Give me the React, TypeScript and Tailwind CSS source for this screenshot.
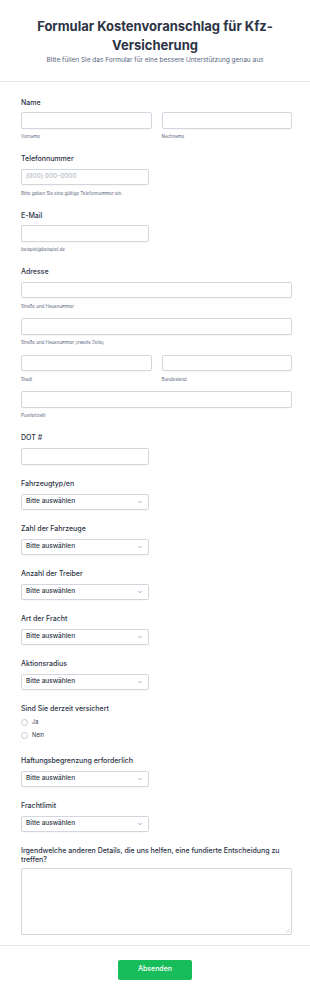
import { ChevronDown } from "lucide-react";

const selects = [
  "Fahrzeugtyp/en",
  "Zahl der Fahrzeuge",
  "Anzahl der Treiber",
  "Art der Fracht",
  "Aktionsradius",
];

function Label({ children }: { children: React.ReactNode }) {
  return (
    <p className="text-[7px] leading-[10px] font-medium text-[#2c3345]">
      {children}
    </p>
  );
}

function Sub({ children }: { children: React.ReactNode }) {
  return (
    <p className="mt-[4.5px] text-[4.5px] leading-[7px] text-[#57647e]">
      {children}
    </p>
  );
}

function Input({ className = "", placeholder }: { className?: string; placeholder?: string }) {
  return (
    <div
      className={`flex h-[16.5px] items-center rounded-[2px] border border-[#d3d6de] bg-white px-[4px] shadow-[0_1px_1px_rgba(0,0,0,0.03)] ${className}`}
    >
      {placeholder && (
        <span className="text-[6.5px] text-[#a5adbd]">{placeholder}</span>
      )}
    </div>
  );
}

function Select({ label }: { label: string }) {
  return (
    <div className="mb-[13.5px]">
      <Label>{label}</Label>
      <div className="mt-[5px] flex h-[16.5px] w-[128px] items-center justify-between rounded-[2px] border border-[#d3d6de] bg-white pl-[4px] pr-[5px] shadow-[0_1px_1px_rgba(0,0,0,0.03)]">
        <span className="text-[6.5px] font-medium text-[#2c3345]">
          Bitte auswählen
        </span>
        <ChevronDown size={6} strokeWidth={2} className="text-[#57647e]" />
      </div>
    </div>
  );
}

function Radio({ label }: { label: string }) {
  return (
    <div className="flex h-[13px] items-center gap-[4px]">
      <span className="h-[7px] w-[7px] rounded-full border border-[#c3cad8] bg-white" />
      <span className="text-[5.5px] text-[#2c3345]">{label}</span>
    </div>
  );
}

export default function App() {
  return (
    <div className="min-h-[999px] bg-white font-['Inter',sans-serif]">
      {/* Header */}
      <div className="border-b border-[#e8e9ed] pb-[16.5px] pt-[17px] text-center">
        <h1 className="px-[20px] text-[13px] leading-[18.5px] font-bold text-[#2c3345]">
          Formular Kostenvoranschlag für Kfz-Versicherung
        </h1>
        <p className="mt-[1.5px] text-[6.5px] leading-[9px] text-[#57647e]">
          Bitte füllen Sie das Formular für eine bessere Unterstützung genau aus
        </p>
      </div>

      <div className="pl-[21px] pr-[18px] pt-[16px]">
        {/* Name */}
        <div className="mb-[14px]">
          <Label>Name</Label>
          <div className="mt-[4px] grid grid-cols-2 gap-[10px]">
            <div>
              <Input />
              <Sub>Vorname</Sub>
            </div>
            <div>
              <Input />
              <Sub>Nachname</Sub>
            </div>
          </div>
        </div>

        <div className="mb-[14px]">
          <Label>Telefonnummer</Label>
          <Input className="mt-[4.5px] w-[128px]" placeholder="(000) 000-0000" />
          <Sub>Bitte geben Sie eine gültige Telefonnummer ein.</Sub>
        </div>

        <div className="mb-[14px]">
          <Label>E-Mail</Label>
          <Input className="mt-[4.5px] w-[128px]" />
          <Sub>beispiel@beispiel.de</Sub>
        </div>

        {/* Adresse */}
        <div className="mb-[14px]">
          <Label>Adresse</Label>
          <Input className="mt-[4.5px]" />
          <Sub>Straße und Hausnummer</Sub>
          <Input className="mt-[8.5px]" />
          <Sub>Straße und Hausnummer (zweite Zeile)</Sub>
          <div className="mt-[8.5px] grid grid-cols-2 gap-[10px]">
            <div>
              <Input />
              <Sub>Stadt</Sub>
            </div>
            <div>
              <Input />
              <Sub>Bundesland</Sub>
            </div>
          </div>
          <Input className="mt-[8.5px]" />
          <Sub>Postleitzahl</Sub>
        </div>

        <div className="mb-[14px]">
          <Label>DOT #</Label>
          <Input className="mt-[5px] w-[128px]" />
        </div>

        {selects.map((s) => (
          <Select key={s} label={s} />
        ))}

        <div className="mb-[14px]">
          <Label>Sind Sie derzeit versichert</Label>
          <div className="mt-[2px]">
            <Radio label="Ja" />
            <Radio label="Nein" />
          </div>
        </div>

        <Select label="Haftungsbegrenzung erforderlich" />
        <Select label="Frachtlimit" />

        <div className="pb-[10px]">
          <p className="text-[7px] leading-[9px] font-medium text-[#2c3345]">
            Irgendwelche anderen Details, die uns helfen, eine fundierte
            Entscheidung zu treffen?
          </p>
          <div className="relative mt-[4px] h-[67.5px] rounded-[2px] border border-[#d3d6de] bg-white">
            <svg
              width="5"
              height="5"
              viewBox="0 0 5 5"
              className="absolute bottom-[1px] right-[1px]"
            >
              <path d="M4.5 1 L1 4.5 M4.5 3 L3 4.5" stroke="#b0b5bf" strokeWidth="0.6" />
            </svg>
          </div>
        </div>
      </div>

      {/* Footer */}
      <div className="flex justify-center border-t border-[#e8e9ed] pt-[13.5px]">
        <button className="h-[20px] w-[74px] rounded-[2px] bg-[#18bd5b] text-[7px] font-medium text-white">
          Absenden
        </button>
      </div>
    </div>
  );
}
